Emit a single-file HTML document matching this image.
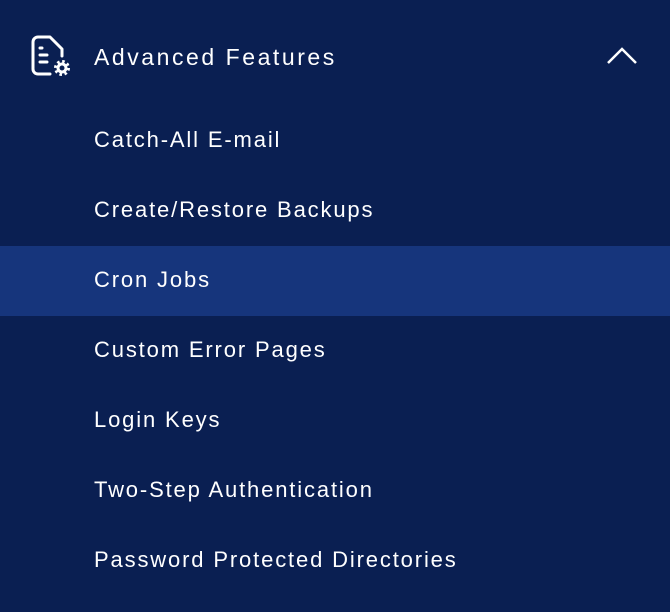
<html><head><style>
body{margin:0;width:670px;height:612px;background:#0a1f52;font-family:"Liberation Sans",sans-serif;color:#fff;position:relative;overflow:hidden}
.t{position:absolute;left:94px;font-size:22px;letter-spacing:1.85px;line-height:30px}
.hl{position:absolute;left:0;top:246px;width:670px;height:70px;background:#16357c}
</style></head><body>
<svg style="position:absolute;left:30px;top:34px" width="42" height="44" viewBox="0 0 42 44" fill="none" stroke="#fff" stroke-width="3" stroke-linecap="round" stroke-linejoin="round">
<path d="M20 40H8a5 5 0 0 1-5-5V8a5 5 0 0 1 5-5h12l12 12v7"/>
<path d="M10 14h2M10 21h7M10 28h7"/>
<circle cx="32" cy="34" r="6.5" stroke-width="3" stroke-dasharray="2.5 2.6" stroke-linecap="butt"/>
<circle cx="32" cy="34" r="4" stroke-width="3"/>
</svg>
<div class="t" style="top:42px;font-size:23px;letter-spacing:2.55px">Advanced Features</div>
<svg style="position:absolute;left:606px;top:46px" width="32" height="20" viewBox="0 0 32 20" fill="none" stroke="#fff" stroke-width="2.5"><path d="M2 17L16 3l14 14"/></svg>
<div class="t" style="top:125px">Catch-All E-mail</div>
<div class="t" style="top:195px">Create/Restore Backups</div>
<div class="hl"></div>
<div class="t" style="top:265px">Cron Jobs</div>
<div class="t" style="top:335px">Custom Error Pages</div>
<div class="t" style="top:405px">Login Keys</div>
<div class="t" style="top:475px">Two-Step Authentication</div>
<div class="t" style="top:545px">Password Protected Directories</div>
</body></html>
